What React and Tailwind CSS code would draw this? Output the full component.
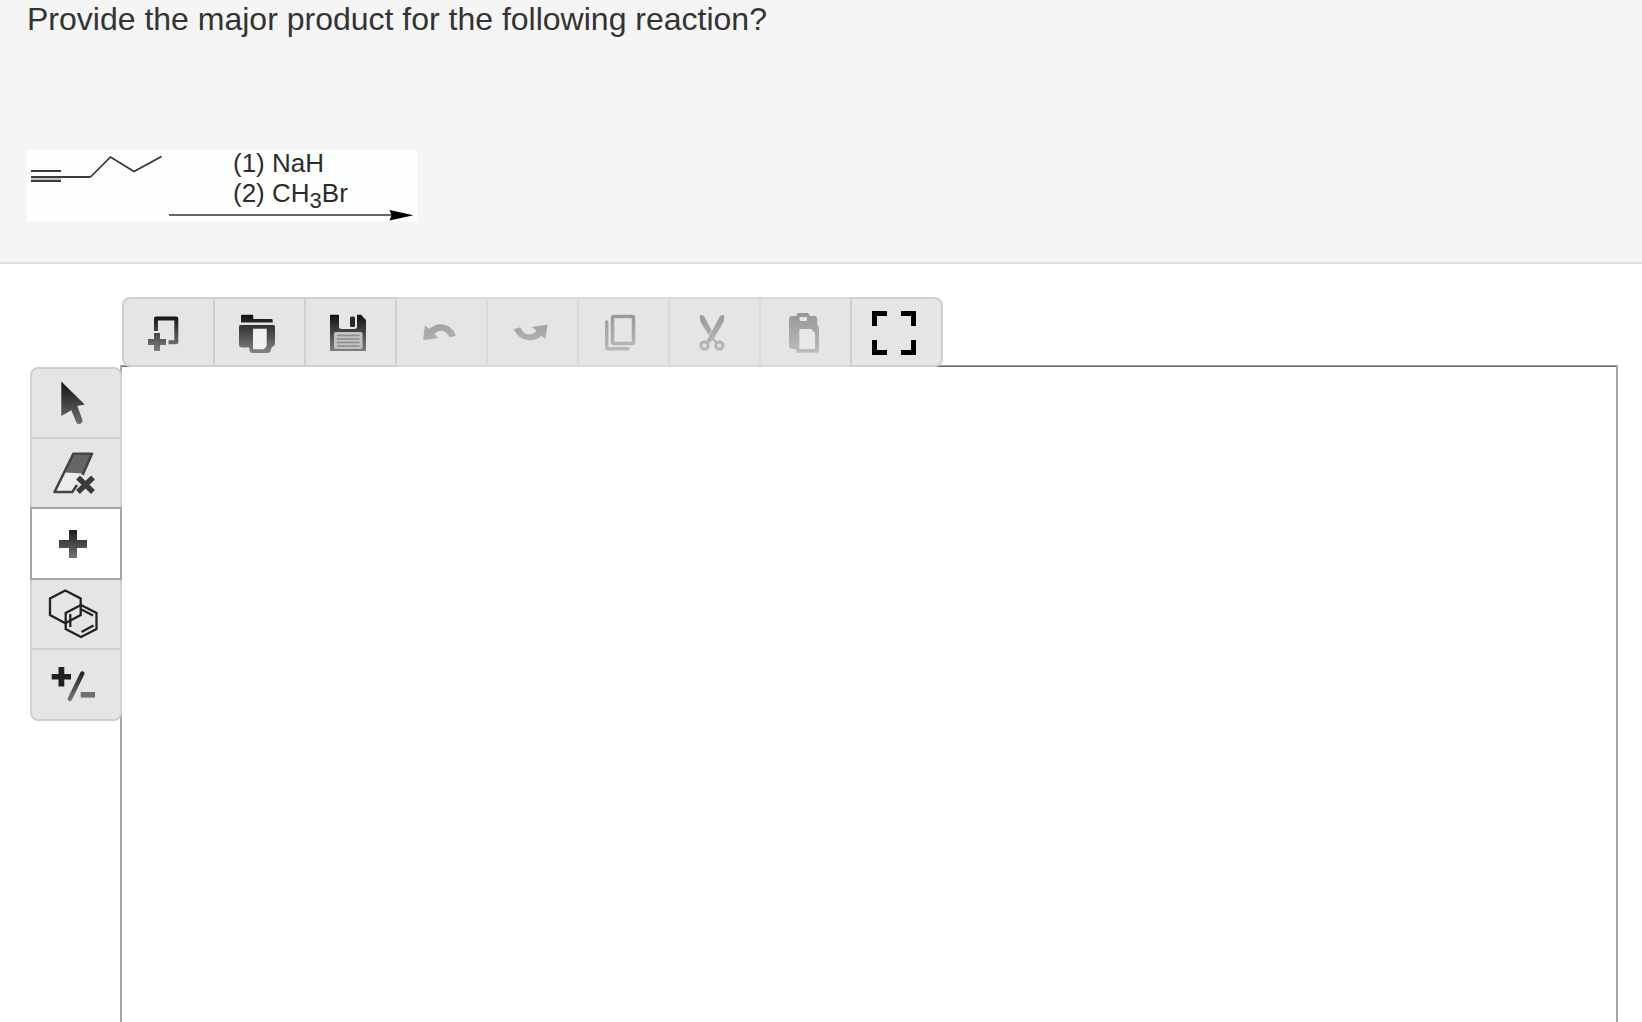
import React, { useState } from 'react';
import clsx from 'clsx';

// Shared vertical gradients used by all toolbar glyphs
const Gradients = () => (
  <svg width="0" height="0" className="absolute" aria-hidden="true">
    <defs>
      <linearGradient id="ink" gradientUnits="userSpaceOnUse" x1="0" y1="16" x2="0" y2="56">
        <stop offset="0" stopColor="#0c0c0c" />
        <stop offset="1" stopColor="#848484" />
      </linearGradient>
      <linearGradient id="faded" gradientUnits="userSpaceOnUse" x1="0" y1="16" x2="0" y2="56">
        <stop offset="0" stopColor="#989898" />
        <stop offset="1" stopColor="#bcbcbc" />
      </linearGradient>
      <linearGradient id="cursor" gradientUnits="userSpaceOnUse" x1="0" y1="16" x2="0" y2="56">
        <stop offset="0" stopColor="#161616" />
        <stop offset="1" stopColor="#6c6c6c" />
      </linearGradient>
    </defs>
  </svg>
);

const FILE_TOOLS = [
  {
    id: 'new',
    label: 'New',
    icon: (
      <>
        <path d="M34 34V21.5H54.3V45.3H46.5" fill="none" stroke="url(#ink)" strokeWidth="4" strokeLinejoin="round" />
        <path d="M32 36h6v6h6v6h-6v6h-6v-6h-6v-6h6z" fill="url(#ink)" />
      </>
    ),
  },
  {
    id: 'open',
    label: 'Open',
    icon: (
      <>
        <path d="M28 25.5V19q0-1.3 1.3-1.3H39q1.3 0 1.3 1.3v3H58.4q1.3 0 1.3 1.3v2.2z" fill="url(#ink)" />
        <path d="M27.5 28H60.5q1.5 0 1.5 1.5V46q0 3-3 4l-2 5-2 1H39l-2-1-1-4.5H29q-3 0-3-3v-18q0-1.5 1.5-1.5z" fill="url(#ink)" />
        <path d="M40 31.7H53.7V49L51 52.3H40z" fill="#f0f0f0" />
      </>
    ),
  },
  {
    id: 'save',
    label: 'Save',
    icon: (
      <>
        <path d="M26 17.7H57L62 23V54H26z" fill="url(#ink)" />
        <path d="M35 17H53V29.5Q53 32 50.5 32H37.5Q35 32 35 29.5z" fill="#e6e6e6" />
        <rect x="46" y="19.5" width="5" height="10.5" rx="1.5" fill="#2a2a2a" />
        <rect x="30" y="35" width="28.5" height="17" rx="2" fill="#c2c2c2" />
        <path d="M33 38.5H55.5M33 42H55.5M33 45.5H55.5M33 49H55.5" stroke="#8b8b8b" strokeWidth="1.3" />
      </>
    ),
  },
  {
    id: 'undo',
    label: 'Undo',
    disabled: true,
    icon: <path d="M28 43.3L30 28.3L34 32Q40 27 46.7 27.3Q57 28 61 38.8L54.3 40.3Q51.5 34 46.7 33.7Q42 33.7 39.5 37.3L43.3 41z" fill="url(#faded)" />,
  },
  {
    id: 'redo',
    label: 'Redo',
    disabled: true,
    icon: <path d="M27.7 32.3L34.3 30.3Q37.5 37.5 43 37.5Q47.5 37.3 50.7 33.7L45.7 30L61.7 27.7L59.3 42L55.3 39Q50 43.5 43 43.5Q32 42.5 27.7 32.3z" fill="url(#faded)" />,
  },
  {
    id: 'copy',
    label: 'Copy',
    disabled: true,
    icon: (
      <g fill="none" stroke="url(#faded)" strokeLinecap="round">
        <rect x="35.5" y="19.5" width="21" height="27" rx="1.5" strokeWidth="3.6" />
        <path d="M29.7 25V50.5Q29.7 51.7 31 51.7H51" strokeWidth="3.4" />
      </g>
    ),
  },
  {
    id: 'cut',
    label: 'Cut',
    disabled: true,
    icon: (
      <>
        <path d="M32.5 18Q36 18 37 21L43.5 33L41 38.5L33 26Q31 21 32.5 18z" fill="url(#faded)" />
        <path d="M55.5 18Q52 18 51 21L38.500 44L41.500 46L46 41L55 26Q57 21 55.500 18z" fill="url(#faded)" />
        <circle cx="36.500" cy="48.500" r="3.600" fill="none" stroke="url(#faded)" strokeWidth="3.200" />
        <circle cx="51.300" cy="48.500" r="3.600" fill="none" stroke="url(#faded)" strokeWidth="3.200" />
        <path d="M44.500 41.500L48.500 45.500" stroke="url(#faded)" strokeWidth="2.400" />
      </>
    ),
  },
  {
    id: 'paste',
    label: 'Paste',
    disabled: true,
    icon: (
      <>
        <path d="M32 19H37L39 16H49L51 19H56.5L58.3 21V28L60 30V54L58.5 55.7H38L36.5 52H32L30 50V21z" fill="url(#faded)" />
        <rect x="40.5" y="20" width="7.5" height="4" rx="1" fill="#e6e6e6" />
        <path d="M40.3 32H52L56 36V52H40.3z" fill="#e8e8e8" />
      </>
    ),
  },
  {
    id: 'fullscreen',
    label: 'Full screen',
    icon: <path d="M24.5 29V16.5H37M51 16.5H63.5V29M63.5 43V55.5H51M37 55.5H24.5V43" fill="none" stroke="#000" strokeWidth="5" />,
  },
];

const DRAW_TOOLS = [
  {
    id: 'select',
    label: 'Select',
    size: 'h-[72px]',
    icon: <path d="M31.3 14.5L54.7 37.5L47.3 39L52.5 53Q52.5 57 49 57Q46.5 57 46 54.5L41.3 43.3L31.3 49z" fill="url(#cursor)" />,
  },
  {
    id: 'erase',
    label: 'Erase',
    size: 'h-[72px]',
    icon: (
      <>
        <path d="M35 36H52L44 52L41 54H26z" fill="#ececec" />
        <path d="M43.5 16.7H62L53 36.5L35.5 35.5z" fill="#666" />
        <path d="M47 48L42.3 55H24.5L43.5 16.7H62L52.5 38" fill="none" stroke="#444" strokeWidth="2.6" strokeLinejoin="round" />
        <path d="M48 40.5L63 55M63 40.5L48 55" stroke="#3a3a3a" strokeWidth="5.4" />
      </>
    ),
  },
  {
    id: 'bond',
    label: 'Single bond',
    size: 'h-[73px]',
    icon: <path d="M39 22h8v10h10v8H47v10h-8V40H29v-8h10z" fill="url(#ink)" />,
  },
  {
    id: 'rings',
    label: 'Rings',
    size: 'h-[72px]',
    icon: (
      <g fill="none" stroke="#222" strokeWidth="2.3">
        <path d="M35.3 12.5L50.7 20.5V37L35.3 45.3L20 37V20.5z" />
        <path d="M51 27L66.5 35V51L51 59L35.7 51V35z" />
        <path d="M51.5 31.5L63 37.5M51.5 54L63.5 47.5M40.3 36V49" />
      </g>
    ),
  },
  {
    id: 'charge',
    label: 'Charge',
    size: 'h-[73px]',
    icon: (
      <>
        <path d="M28.5 18h5.8v7H41v5.6h-6.7v7h-5.8v-7H21.7V25h6.8z" fill="#202020" />
        <path d="M52.3 24.5L39.8 50" stroke="url(#ink)" strokeWidth="4.4" strokeLinecap="round" />
        <rect x="50.7" y="43" width="14.3" height="5.6" fill="#707070" />
      </>
    ),
  },
];

const Toolbar = () => (
  <div role="toolbar" aria-label="File" className="relative z-10 ml-[92px] flex h-[70px]">
    {FILE_TOOLS.map((tool) => (
      <button
        key={tool.id}
        type="button"
        aria-label={tool.label}
        disabled={tool.disabled}
        className={clsx(
          'relative -ml-[2px] w-[93px] border-2 bg-[#e5e5e5] first:ml-0 first:rounded-l-lg last:rounded-r-lg',
          tool.disabled ? 'border-[#dadada]' : 'z-10 border-[#cfcfcf]'
        )}
      >
        <svg viewBox="2 2 89 66" className="block h-[66px] w-[89px]">{tool.icon}</svg>
      </button>
    ))}
  </div>
);

const SideTools = ({ active, onSelect }) => (
  <div role="toolbar" aria-label="Drawing" className="z-10 -mr-[2px] mt-[2px] flex w-[92px] shrink-0 flex-col self-start">
    {DRAW_TOOLS.map((tool) => (
      <button
        key={tool.id}
        type="button"
        aria-label={tool.label}
        aria-pressed={active === tool.id}
        onClick={() => onSelect(tool.id)}
        className={clsx(
          'relative -mt-[2px] border-2 first:mt-0 first:rounded-t-lg last:rounded-b-lg',
          tool.size,
          active === tool.id ? 'z-10 border-[#a6a6a6] bg-white' : 'border-[#cfcfcf] bg-[#e5e5e5]'
        )}
      >
        <svg viewBox="2 2 88 68" className="block h-[68px] w-[88px]">{tool.icon}</svg>
      </button>
    ))}
  </div>
);

// 1-alkyne starting material, reagents written over the arrow
const Reaction = () => (
  <figure className="relative flex h-[72px] w-[390px] items-center bg-[#fdfffc] pb-4 pl-[206px]">
    <svg viewBox="0 0 390 72" className="absolute inset-0 h-full w-full" aria-hidden="true">
      <path d="M4 27H34V31H4z" fill="#c4c4c4" />
      <path d="M4 21H34M4 31H34M4 27H63.5" fill="none" stroke="#3a3a3a" strokeWidth="2.1" />
      <path d="M63.5 27L83.5 7L107 21.5L134.5 6.5" fill="none" stroke="#333" strokeWidth="1.7" />
      <path d="M142 65H366" stroke="#666" strokeWidth="2.2" />
      <path d="M362.5 60L386.5 65.2L362.5 70.5L364.5 65.2z" fill="#000" />
    </svg>
    <figcaption className="text-[26px] leading-[30px] whitespace-nowrap text-[#2c2c2c]">
      <p>(1) NaH</p>
      <p>(2) CH<sub className="bottom-[-6px] text-[22px]">3</sub>Br</p>
    </figcaption>
  </figure>
);

const App = () => {
  const [activeTool, setActiveTool] = useState('bond');

  return (
    <div className="flex min-h-screen flex-col bg-white font-['Liberation_Sans',Arial,sans-serif]">
      <Gradients />

      {/* Question */}
      <header className="border-b-2 border-[#dddddd] bg-[#f5f5f5] px-[27px] pb-10">
        <h1 className="mb-28 text-[32px] leading-[38px] text-[#333333]">
          Provide the major product for the following reaction?
        </h1>
        <Reaction />
      </header>

      {/* Structure editor */}
      <main className="flex flex-1 flex-col pt-[33px] pr-6 pl-[30px]">
        <Toolbar />
        <div className="-mt-[2px] flex flex-1">
          <SideTools active={activeTool} onSelect={setActiveTool} />
          <div className="flex-1 border-x-2 border-t border-[#a6a6a6] bg-white shadow-[inset_0_1px_0_#666666]" />
        </div>
      </main>
    </div>
  );
};

export default App;
